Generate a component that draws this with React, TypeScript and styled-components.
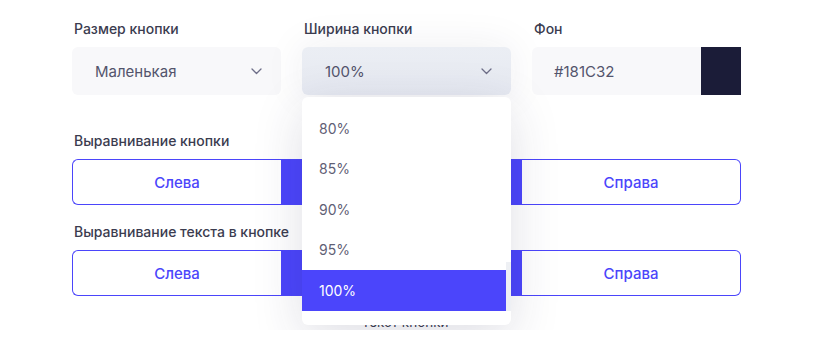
import React from "react";
import styled, { createGlobalStyle } from "styled-components";

const GlobalStyle = createGlobalStyle`
  body {
    margin: 0;
    background: #fff;
    font-family: Inter, "Noto Sans", sans-serif;
  }
`;

const Page = styled.div`
  width: 669px;
  padding: 20px 0 0 72px;
`;

const TopGrid = styled.div`
  display: grid;
  grid-template-columns: repeat(3, 1fr);
  column-gap: 21px;
  margin-bottom: 37px;
`;

const Field = styled.div`
  position: relative;
  display: flex;
  flex-direction: column;
  gap: 9px;
`;

const Group = styled(Field)`
  margin-bottom: 18px;
`;

const Label = styled.div`
  font-size: 14px;
  line-height: 18px;
  font-weight: 500;
  color: #3b3c4f;
  padding-left: 2px;
`;

const SelectBox = styled.div<{ $open?: boolean }>`
  height: 48px;
  border-radius: 6px;
  display: flex;
  align-items: center;
  justify-content: space-between;
  padding: 0 19px 0 23px;
  background: ${(p) => (p.$open ? "linear-gradient(180deg, #ebeef4, #e6e9f1)" : "#f8f8fa")};
  ${(p) => p.$open && "box-shadow: 0 0 40px rgba(40, 40, 80, 0.08);"}
  font-size: 15px;
  color: #53546c;
`;

const ColorBox = styled.div`
  height: 48px;
  border-radius: 6px 0 0 6px;
  display: flex;
  align-items: center;
  background: #f8f8fa;
  font-size: 15px;
  color: #53546c;
  overflow: hidden;
`;

const ColorText = styled.span`
  flex: 1;
  padding-left: 22px;
`;

const Swatch = styled.div<{ $color: string }>`
  width: 40px;
  align-self: stretch;
  background: ${(p) => p.$color};
`;

const Segments = styled.div`
  display: flex;
  height: 46px;
`;

const Segment = styled.div<{ $w?: number; $active?: boolean; $pos: "left" | "mid" | "right" }>`
  ${(p) => (p.$w ? `width: ${p.$w}px;` : "flex: 1;")}
  display: flex;
  align-items: center;
  justify-content: center;
  box-sizing: border-box;
  font-size: 15px;
  font-weight: 500;
  color: ${(p) => (p.$active ? "#fff" : "#4b45fb")};
  background: ${(p) => (p.$active ? "#4b45fb" : "#fff")};
  border: 1px solid #4b45fb;
  ${(p) => p.$pos === "left" && "border-right: none; border-radius: 6px 0 0 6px;"}
  ${(p) => p.$pos === "right" && "border-left: none; border-radius: 0 6px 6px 0;"}
`;

const Caption = styled.div`
  text-align: center;
  font-size: 13.5px;
  color: #3b3c4f;
  margin-top: 10px;
  padding-right: 3px;
`;

const Dropdown = styled.div`
  position: absolute;
  top: 77px;
  left: 0;
  right: 0;
  height: 228px;
  background: #fff;
  border-radius: 6px;
  box-shadow: 0 12px 50px rgba(40, 40, 80, 0.15);
  padding-top: 11px;
  box-sizing: border-box;
  z-index: 10;
  overflow: hidden;
`;

const Option = styled.div<{ $selected?: boolean }>`
  height: 40.5px;
  margin-right: 5px;
  display: flex;
  align-items: center;
  padding-left: 17px;
  font-size: 14px;
  color: ${(p) => (p.$selected ? "#fff" : "#5f6075")};
  background: ${(p) => (p.$selected ? "#4b45fb" : "transparent")};
`;

const ScrollThumb = styled.div`
  position: absolute;
  right: 0;
  top: 165px;
  width: 5px;
  height: 49px;
  background: #eef0f4;
`;

const Chevron = () => (
  <svg width="11" height="7" viewBox="0 0 11 7" fill="none">
    <path d="M1 1l4.5 4.5L10 1" stroke="#6d6e88" strokeWidth="1.3" strokeLinecap="round" strokeLinejoin="round" />
  </svg>
);

const widths = ["80%", "85%", "90%", "95%", "100%"];

const AlignRow: React.FC<{ label: string }> = ({ label }) => (
  <Group>
    <Label>{label}</Label>
    <Segments>
      <Segment $pos="left" $w={209}>Слева</Segment>
      <Segment $pos="mid" $w={241} $active>По центру</Segment>
      <Segment $pos="right">Справа</Segment>
    </Segments>
  </Group>
);

export default function App() {
  return (
    <>
      <GlobalStyle />
      <Page>
        <TopGrid>
          <Field>
            <Label>Размер кнопки</Label>
            <SelectBox>
              Маленькая
              <Chevron />
            </SelectBox>
          </Field>
          <Field>
            <Label>Ширина кнопки</Label>
            <SelectBox $open>
              100%
              <Chevron />
            </SelectBox>
            <Dropdown>
              {widths.map((w) => (
                <Option key={w} $selected={w === "100%"}>{w}</Option>
              ))}
              <ScrollThumb />
            </Dropdown>
          </Field>
          <Field>
            <Label>Фон</Label>
            <ColorBox>
              <ColorText>#181C32</ColorText>
              <Swatch $color="#1b1c38" />
            </ColorBox>
          </Field>
        </TopGrid>
        <AlignRow label="Выравнивание кнопки" />
        <AlignRow label="Выравнивание текста в кнопке" />
        <Caption>Текст кнопки</Caption>
      </Page>
    </>
  );
}
